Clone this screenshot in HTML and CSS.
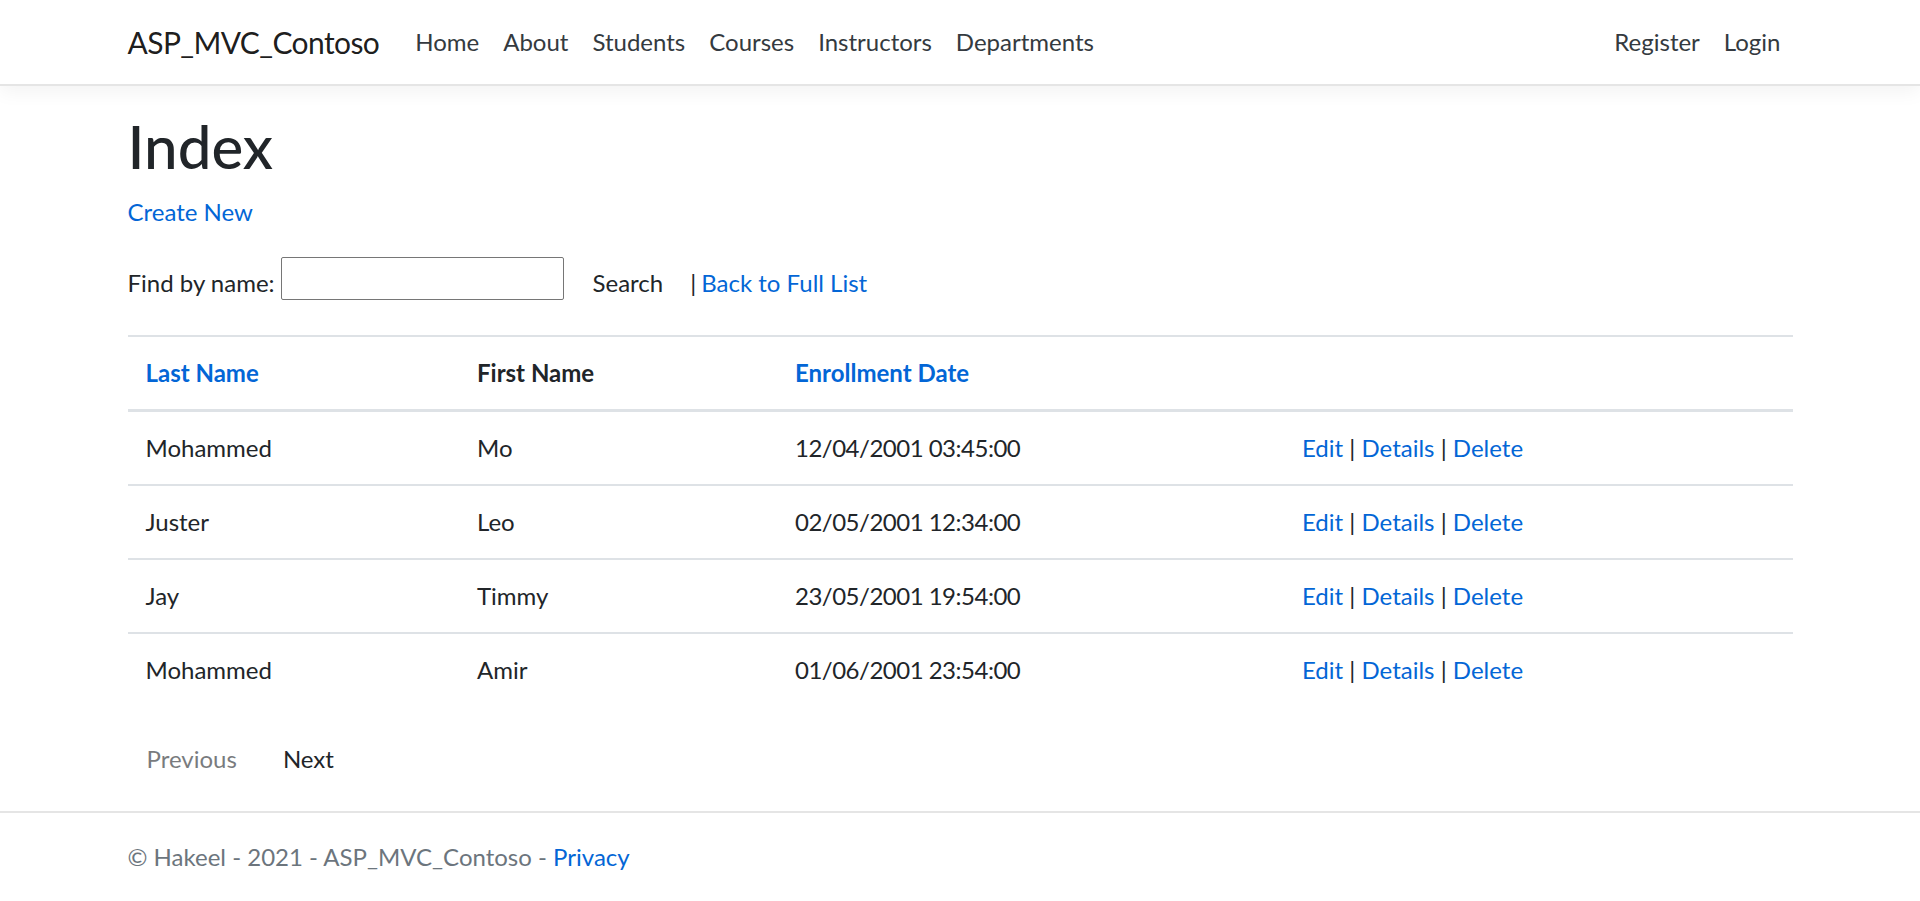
FILE: index.html
```html
<!DOCTYPE html>
<html lang="en">
<head>
<meta charset="utf-8">
<title>Index - ASP_MVC_Contoso</title>
<link rel="stylesheet" href="styles.css">
</head>
<body>
<header class="navbar">
  <div class="container nav-inner">
    <a class="brand" href="#">ASP_MVC_Contoso</a>
    <nav class="nav-main">
      <a class="nav-link" href="#">Home</a>
      <a class="nav-link" href="#">About</a>
      <a class="nav-link" href="#">Students</a>
      <a class="nav-link" href="#">Courses</a>
      <a class="nav-link" href="#">Instructors</a>
      <a class="nav-link" href="#">Departments</a>
    </nav>
    <nav class="nav-auth">
      <a class="nav-link" href="#">Register</a>
      <a class="nav-link" href="#">Login</a>
    </nav>
  </div>
</header>
<main class="container main">
  <h1 class="title">Index</h1>
  <p class="create"><a href="#">Create New</a></p>
  <form class="search-form">
    <label class="search-label" for="q">Find by name:</label>
    <input class="search-input" id="q" type="text">
    <button class="btn search-btn" type="button">Search</button>
    <span class="sep">|</span>
    <a class="back" href="#">Back to Full List</a>
  </form>
  <table class="table">
    <thead>
      <tr>
        <th class="c1"><a href="#">Last Name</a></th>
        <th class="c2">First Name</th>
        <th class="c3"><a href="#">Enrollment Date</a></th>
        <th class="c4"></th>
      </tr>
    </thead>
    <tbody>
      <tr>
        <td>Mohammed</td><td>Mo</td><td class="date">12/04/2001 03:45:00</td>
        <td><a href="#">Edit</a> | <a href="#">Details</a> | <a href="#">Delete</a></td>
      </tr>
      <tr>
        <td>Juster</td><td>Leo</td><td class="date">02/05/2001 12:34:00</td>
        <td><a href="#">Edit</a> | <a href="#">Details</a> | <a href="#">Delete</a></td>
      </tr>
      <tr>
        <td>Jay</td><td>Timmy</td><td class="date">23/05/2001 19:54:00</td>
        <td><a href="#">Edit</a> | <a href="#">Details</a> | <a href="#">Delete</a></td>
      </tr>
      <tr>
        <td>Mohammed</td><td>Amir</td><td class="date">01/06/2001 23:54:00</td>
        <td><a href="#">Edit</a> | <a href="#">Details</a> | <a href="#">Delete</a></td>
      </tr>
    </tbody>
  </table>
  <div class="pager">
    <a class="btn disabled" href="#">Previous</a>
    <a class="btn" href="#">Next</a>
  </div>
</main>
<footer class="footer">
  <div class="container">© Hakeel - 2021 - ASP_MVC_Contoso - <a href="#">Privacy</a></div>
</footer>
</body>
</html>
```

FILE: styles.css
```css
* { box-sizing: border-box; }

html, body { margin: 0; padding: 0; }

body {
  font-family: Lato, "Liberation Sans", sans-serif;
  font-size: 24px;
  line-height: 1.5;
  color: #212529;
  background: #fff;
  min-height: 100vh;
  display: flex;
  flex-direction: column;
}

a { color: #0366d6; text-decoration: none; }

.container {
  width: 100%;
  max-width: 1710px;
  margin: 0 auto;
  padding: 0 22.5px;
}

/* navbar */
.navbar {
  padding: 12px 24px;
  background: #fff;
  border-bottom: 2px solid #e5e5e5;
  box-shadow: 0 6px 18px rgba(0, 0, 0, 0.05);
}
.nav-inner {
  display: flex;
  align-items: center;
}
.brand {
  font-size: 30px;
  line-height: 45px;
  letter-spacing: -0.6px;
  padding: 7.5px 0;
  margin-right: 24px;
  color: rgba(0, 0, 0, 0.9);
}
.nav-main, .nav-auth { display: flex; }
.nav-main { flex: 1; }
.nav-link {
  display: block;
  padding: 12px;
  line-height: 36px;
  color: #343a40;
}

/* main */
.main {
  flex: 1;
  margin-top: 24px;
  padding-bottom: 24px;
}
.title {
  font-size: 60px;
  font-weight: 500;
  line-height: 72px;
  margin: 0 0 12px;
}
.create { margin: 0 0 24px; line-height: 36px; }

.search-form {
  display: flex;
  align-items: center;
  height: 57px;
  margin: 0 0 24px;
}
.search-input {
  width: 283px;
  height: 43px;
  margin: 0 0 8px 6px;
  border: 1px solid #767676;
  border-radius: 2px;
  padding: 2px 4px;
  font: inherit;
}
.btn {
  display: inline-block;
  font: inherit;
  line-height: 36px;
  padding: 9.5px 18px;
  border: 1px solid transparent;
  border-radius: 6px;
  background: transparent;
  color: #212529;
}
.search-btn { margin-left: 10px; }
.sep { margin-left: 8px; margin-right: 5px; }

/* table */
.table {
  width: 100%;
  border-collapse: collapse;
  margin-bottom: 24px;
}
.table th, .table td {
  padding: 18px;
  text-align: left;
  vertical-align: top;
  line-height: 36px;
  border-top: 2px solid #dee2e6;
}
.table thead th {
  vertical-align: bottom;
  border-bottom: 3px solid #dee2e6;
  font-weight: 700;
}
.table tbody tr:first-child td { border-top: none; }
.table .date { letter-spacing: -0.5px; }
.c1 { width: 331.5px; }
.c2 { width: 318px; }
.c3 { width: 507px; }

/* pager */
.pager {
  display: flex;
  gap: 8px;
}
.btn.disabled { opacity: 0.6; }

/* footer */
.footer {
  border-top: 2px solid #e5e5e5;
  line-height: 88px;
  color: #6c757d;
  white-space: nowrap;
}
```
